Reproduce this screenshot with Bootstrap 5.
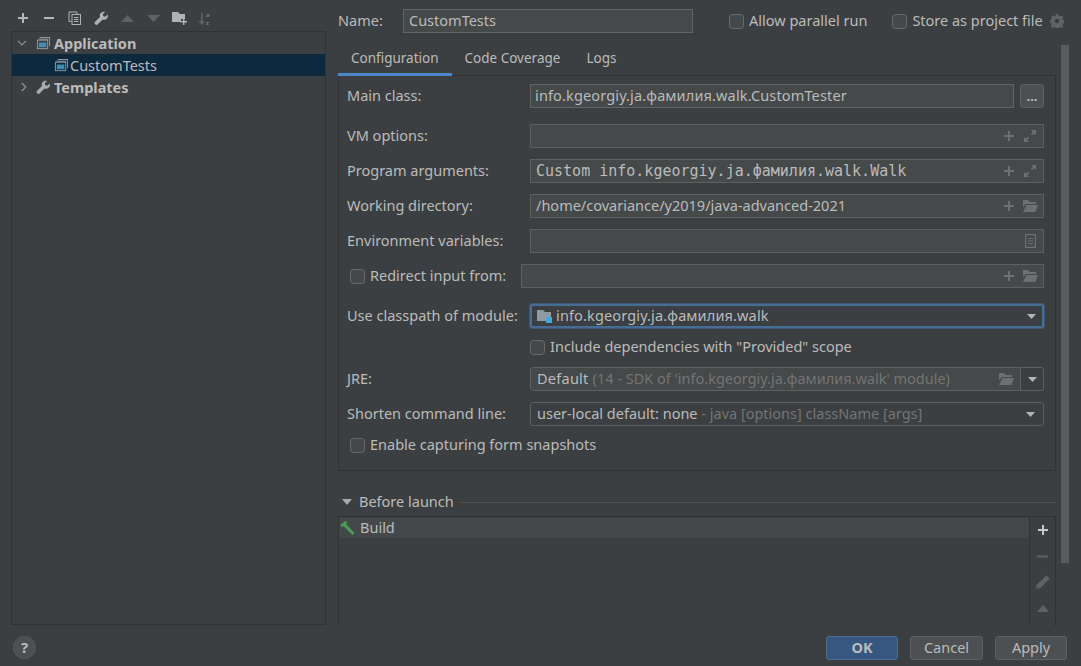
<!DOCTYPE html>
<html lang="en">
<head>
<meta charset="utf-8">
<title>Run Configurations</title>
<link href="https://cdn.jsdelivr.net/npm/bootstrap@5.3.0/dist/css/bootstrap.min.css" rel="stylesheet">
<style>
html,body{height:666px;overflow:hidden;background:#3c3f41;}
body{font-family:"Noto Sans","Liberation Sans",sans-serif;font-size:14.5px;line-height:19px;color:#bbb;}
.dlg{width:1081px;height:666px;}
.dlg-main{height:625px;}
.side{width:315px;margin-left:11px;flex:none;}
.tbar{height:31px;padding:5px 0 0 2px;gap:6px;}
.tbtn{width:20px;height:20px;flex:none;display:flex;align-items:center;justify-content:center;}
.tree{height:594px;border:1px solid #323232;padding-top:0;}
.tnode{height:22px;padding-left:5px;gap:0;}
.tnode.sel{background:#0d293e;}
.tlabel{font-weight:700;}
.chev{width:16px;flex:none;margin-right:3px;}
.ticon{margin-right:3px;}
.ticon-s{margin-right:1px;}
.tindent{width:18px;flex:none;}
.mainp{width:731px;margin-left:12px;flex:none;position:relative;}
.namerow{height:44px;padding-top:9px;}
.namelab{width:65px;flex:none;padding-bottom:2px;}
.fld{height:24px;background:#45494a;border:1px solid #646464;border-radius:0;padding:0 5px 2px 5px;color:#bbb;font-size:14.5px;line-height:19px;display:flex;align-items:center;box-shadow:none;white-space:nowrap;overflow:hidden;}
.fld.dim{border-color:#5e6060;}
.fld.mono{padding-bottom:0;}
.fld.mono .endic{margin-bottom:0;}
.namefld{width:290px;}
.ck{width:15px;height:15px;margin:0 5px 0 0;flex:none;background-color:#43494a;border:1px solid #6b6b6b;border-radius:2px;}
.ck-i{margin-left:3px;margin-right:5px;}
.ck-m{margin-right:5px;}
.cklab{padding-bottom:2px;}
.chk1{margin-left:36px;}
.chk2{margin-left:25px;}
.gearbx{margin-left:7px;}
.tabsrow{height:32px;width:718px;gap:0;border:0;}
.tablnk{height:32px;padding:4px 13px 0;color:#bbb;border-bottom:3px solid transparent;margin:0;line-height:20px;font-size:13.5px;}
.tablnk.on{border-bottom-color:#4a88c7;}
.tablnk:hover{color:#bbb;}
.cfg{width:718px;height:396px;margin-top:-1px;border:1px solid #323232;padding:8px 11px 0 8px;}
.frow{height:24px;}
.flab{width:183px;flex:none;padding-bottom:2px;}
.g16{margin-top:16px;}
.g11{margin-top:11px;}
.g7{margin-top:7px;}
.g8{margin-top:8px;}
.wfull{flex:1 1 auto;min-width:0;}
.browse{width:24px;height:24px;flex:none;margin-left:6px;background:#4c5052;border:1px solid #5e6060;border-radius:3px;padding:0;color:#bbb;font-size:13px;line-height:20px;font-weight:700;}
.mono{font-family:"DejaVu Sans Mono","Liberation Mono",monospace;font-size:15px;}
.endic{margin-left:auto;gap:7px;flex:none;margin-bottom:-2px;}
.lsc{letter-spacing:.14px;margin-left:-1px;}
.lsd{letter-spacing:.25px;}
.envic{margin-right:2px;}
.fade-t{color:#747474;letter-spacing:0;}
.focused{border:2px solid #466d94;border-radius:3px;background:#3c3f41;box-shadow:0 0 0 1px #3d5a78;padding-left:5px;padding-right:6px;}
.modic{margin-right:4px;margin-bottom:-2px;}
.cbx{background:#3c3f41;border-color:#5e6060;border-radius:3px;padding-left:6px;padding-right:8px;}
.jreb{width:23px;height:24px;flex:none;background:#3c3f41;border:1px solid #5e6060;border-left:0;border-radius:0 3px 3px 0;}
.jref{border-radius:3px 0 0 3px;padding-left:6px;padding-right:6px;}
.inner-ind{margin-left:183px;}
.redir{width:174px;flex:none;}
.bl-head{height:22px;margin-top:20px;width:718px;}
.bl-line{flex:1 1 auto;height:1px;background:#515151;margin-left:6px;}
.bl-tri{width:12px;margin:0 6px 0 3px;flex:none;}
.blbox{width:718px;height:110px;margin-top:3px;border:1px solid #323232;border-bottom:0;}
.bllist{flex:1 1 auto;padding-top:1px;}
.blitem{height:20px;background:#45484a;padding-left:1px;gap:5px;}
.bltool{width:26px;flex:none;border-left:1px solid #323232;gap:0;}
.bltool .tbtn{height:26px;width:25px;}
.vscroll{width:8px;flex:none;position:absolute;left:723px;top:45px;height:518px;background:#5a5c5e;}
.foot{height:41px;padding:11px 14px 0 13px;}
.helpb{width:23px;height:23px;border-radius:50%;background:#4c5052;border:1px solid #55595b;color:#bbb;font-weight:700;font-size:15px;line-height:21px;text-align:center;padding:0;}
.dbtn{height:24px;background:#4c5052;border:1px solid #5e6060;border-radius:3px;color:#bbb;font-size:14.5px;line-height:19px;padding:0 0 2px;}
.dbtn.prim{background:#365880;border-color:#4c708c;font-weight:700;}
.w72{width:72px;}
.w73{width:73px;margin-left:12px;}
.w72b{width:72px;margin-left:12px;}
svg{display:block;flex:none;}
</style>
</head>
<body>
<svg width="0" height="0" class="position-absolute">
<defs>
<symbol id="plus" viewBox="0 0 12 12"><path d="M5 1h2v4h4v2H7v4H5V7H1V5h4z"/></symbol>
<symbol id="folder" viewBox="0 0 16 14"><path d="M1 1h5l2 2h6v2H4L1 8z"/><path d="M4.500 6H16l-2.600 7H1z"/></symbol>
<symbol id="expand" viewBox="0 0 16 16"><path d="M9 2h5v5l-1.800-1.800-2 2-1.300-1.300 2-2z"/><path d="M7 14H2V9l1.800 1.800 2-2 1.300 1.300-2 2z"/></symbol>
<symbol id="wrench" viewBox="0 0 16 16"><path d="M14.600 3.600l-2.600 2.500-2-.6-.6-2 2.500-2.600c-2-.6-4 0-5 1.400-.9 1.200-1 2.700-.5 4L1.200 11.500c-.7.700-.7 1.900 0 2.700.8.800 2 .8 2.800 0l5.300-5.200c1.400.6 3 .3 4.200-.7 1.300-1.200 1.700-3 1.100-4.700z"/></symbol>
<symbol id="runcfg" viewBox="0 0 16 16"><path d="M4 1h11v10h-1V2H4z" fill="#8f9aa3"/><path d="M2 3h11v1H3z" fill="#8f9aa3"/><rect x="1.500" y="4.500" width="11" height="9" fill="none" stroke="#8f9aa3"/><rect x="3" y="7" width="8" height="5" fill="#3d8fb8"/></symbol>
</defs>
</svg>
<div class="dlg d-flex flex-column">
 <div class="dlg-main d-flex">
  <div class="side d-flex flex-column">
   <div class="tbar d-flex align-items-center">
    <span class="tbtn"><svg width="12" height="12" fill="#b4b8ba"><use href="#plus"/></svg></span>
    <span class="tbtn"><svg width="12" height="12" viewBox="0 0 12 12" fill="#b4b8ba"><rect x="1" y="5" width="10" height="2"/></svg></span>
    <span class="tbtn"><svg width="14" height="14" viewBox="0 0 14 14" fill="none" stroke="#aeb2b5"><path d="M3.500 10.500h-2.500v-9.500h8v2"/><rect x="4" y="3.500" width="8.500" height="10" fill="#3c3f41"/><path d="M6 6.500h4.500M6 8.500h4.500M6 10.500h4.500"/></svg></span>
    <span class="tbtn"><svg width="15" height="15" fill="#aeb2b5"><use href="#wrench"/></svg></span>
    <span class="tbtn"><svg width="13" height="7" viewBox="0 0 13 7" fill="#5e6264"><path d="M6.500 0L13 7H0z"/></svg></span>
    <span class="tbtn"><svg width="13" height="7" viewBox="0 0 13 7" fill="#5e6264"><path d="M0 0h13L6.500 7z"/></svg></span>
    <span class="tbtn"><svg width="15" height="14" viewBox="0 0 15 14" fill="#aeb2b5"><path d="M0 1h6l2 2h5v5H9v3H0z"/><path d="M11 8h1.500v2H15v1.500h-2.500V14H11v-2.500H8.500V10H11z"/></svg></span>
    <span class="tbtn"><svg width="16" height="17" viewBox="0 0 16 17"><path d="M4 3h1.500v8H8L4.800 15 1.500 11H4z" fill="#5e6264"/><text x="9" y="7" font-size="6" font-family="Noto Sans" font-weight="700" fill="#75797c">a</text><text x="9" y="15" font-size="6" font-family="Noto Sans" font-weight="700" fill="#75797c">z</text></svg></span>
   </div>
   <div class="tree">
    <div class="tnode d-flex align-items-center">
     <span class="chev"><svg width="10" height="6" viewBox="0 0 10 6" fill="none" stroke="#909396" stroke-width="1.200"><path d="M1 .8l4 4 4-4"/></svg></span>
     <svg width="15" height="15" class="ticon"><use href="#runcfg"/></svg>
     <span class="tlabel">Application</span>
    </div>
    <div class="tnode sel d-flex align-items-center">
     <span class="chev"></span><span class="tindent"></span>
     <svg width="15" height="15" class="ticon-s"><use href="#runcfg"/></svg>
     <span>CustomTests</span>
    </div>
    <div class="tnode d-flex align-items-center">
     <span class="chev"><svg width="6" height="10" viewBox="0 0 6 10" fill="none" stroke="#909396" stroke-width="1.200" class="ms-1"><path d="M.8 1l4 4-4 4"/></svg></span>
     <svg width="15" height="15" fill="#a8acaf" class="ticon"><use href="#wrench"/></svg>
     <span class="tlabel">Templates</span>
    </div>
   </div>
  </div>
  <div class="mainp">
   <div class="namerow d-flex align-items-start">
    <div class="namelab d-flex align-items-center" style="height:24px">Name:</div>
    <div class="fld namefld">CustomTests</div>
    <div class="d-flex align-items-center chk1" style="height:24px"><input type="checkbox" class="form-check-input ck" aria-label="Allow parallel run"><span class="cklab">Allow parallel run</span></div>
    <div class="d-flex align-items-center chk2" style="height:24px"><input type="checkbox" class="form-check-input ck" aria-label="Store as project file"><span class="cklab">Store as project file</span></div>
    <div class="gearbx d-flex align-items-center" style="height:24px"><svg width="14" height="14" viewBox="0 0 16 16" fill="#5f6365"><path fill-rule="evenodd" d="M6.500 0h3l.4 2 1.500.7 1.800-1.100 2 2.100-1.100 1.700.7 1.600 2 .4v3l-2 .4-.7 1.500 1.100 1.800-2 2-1.800-1.100-1.500.7-.4 2h-3l-.4-2-1.500-.7-1.800 1.100-2-2 1.100-1.800-.7-1.500-2-.4v-3l2-.4.7-1.600L1.300 3.700l2-2.100 1.800 1.100 1.500-.7zM8 5.500a2.500 2.500 0 100 5 2.500 2.500 0 000-5z"/></svg></div>
   </div>
   <div class="tabsrow nav d-flex">
    <a class="nav-link tablnk on" href="#">Configuration</a>
    <a class="nav-link tablnk" href="#">Code Coverage</a>
    <a class="nav-link tablnk" href="#">Logs</a>
   </div>
   <div class="cfg">
    <div class="frow d-flex align-items-center">
     <div class="flab">Main class:</div>
     <div class="fld wfull"><span class="lsc">info.kgeorgiy.ja.фамилия.walk.CustomTester</span></div>
     <button class="btn browse" type="button">...</button>
    </div>
    <div class="frow d-flex align-items-center g16">
     <div class="flab">VM options:</div>
     <div class="fld dim wfull"><span class="endic d-flex align-items-center"><svg width="12" height="12" fill="#6c7072"><use href="#plus"/></svg><svg width="16" height="16" fill="#6c7072"><use href="#expand"/></svg></span></div>
    </div>
    <div class="frow d-flex align-items-center g11">
     <div class="flab">Program arguments:</div>
     <div class="fld dim wfull mono">Custom info.kgeorgiy.ja.фамилия.walk.Walk<span class="endic d-flex align-items-center"><svg width="12" height="12" fill="#6c7072"><use href="#plus"/></svg><svg width="16" height="16" fill="#6c7072"><use href="#expand"/></svg></span></div>
    </div>
    <div class="frow d-flex align-items-center g11">
     <div class="flab">Working directory:</div>
     <div class="fld dim wfull">/home/covariance/y2019/java-advanced-2021<span class="endic d-flex align-items-center"><svg width="12" height="12" fill="#6c7072"><use href="#plus"/></svg><svg width="16" height="14" fill="#6c7072"><use href="#folder"/></svg></span></div>
    </div>
    <div class="frow d-flex align-items-center g11">
     <div class="flab">Environment variables:</div>
     <div class="fld dim wfull"><span class="endic d-flex align-items-center"><svg width="11" height="14" viewBox="0 0 11 14" fill="none" stroke="#6c7072" class="envic"><rect x=".5" y=".5" width="10" height="13" stroke-width="1.500"/><path d="M3 4.500h5M3 7h5M3 9.500h5"/></svg></span></div>
    </div>
    <div class="frow d-flex align-items-center g11">
     <div class="redir d-flex align-items-center"><input type="checkbox" class="form-check-input ck ck-i" aria-label="Redirect input from"><span class="cklab">Redirect input from:</span></div>
     <div class="fld dim wfull"><span class="endic d-flex align-items-center"><svg width="12" height="12" fill="#6c7072"><use href="#plus"/></svg><svg width="16" height="14" fill="#6c7072"><use href="#folder"/></svg></span></div>
    </div>
    <div class="frow d-flex align-items-center g16">
     <div class="flab">Use classpath of module:</div>
     <div class="fld focused wfull"><svg width="16" height="14" viewBox="0 0 16 14" class="modic"><path d="M0 1h6l2 2h6v9H0z" fill="#8f9aa3"/><rect x="9" y="8" width="6" height="6" fill="#3fa9d8"/></svg><span class="lsc">info.kgeorgiy.ja.фамилия.walk</span><span class="endic"><svg width="9" height="5" viewBox="0 0 9 5" fill="#b4b4b4"><path d="M0 0h9L4.500 5z"/></svg></span></div>
    </div>
    <div class="frow d-flex align-items-center g7 inner-ind"><input type="checkbox" class="form-check-input ck ck-m" aria-label="Include dependencies"><span class="cklab">Include dependencies with "Provided" scope</span></div>
    <div class="frow d-flex align-items-center g8">
     <div class="flab">JRE:</div>
     <div class="fld dim jref wfull"><span class="lsd">Default <span class="fade-t">(14 - SDK of 'info.kgeorgiy.ja.фамилия.walk' module)</span></span><span class="endic"><svg width="16" height="14" fill="#6c7072"><use href="#folder"/></svg></span></div>
     <div class="jreb d-flex align-items-center justify-content-center"><svg width="9" height="5" viewBox="0 0 9 5" fill="#b4b4b4"><path d="M0 0h9L4.500 5z"/></svg></div>
    </div>
    <div class="frow d-flex align-items-center g11">
     <div class="flab">Shorten command line:</div>
     <div class="fld cbx wfull"><span>user-local default: none <span class="fade-t">- java [options] className [args]</span></span><span class="endic"><svg width="9" height="5" viewBox="0 0 9 5" fill="#b4b4b4"><path d="M0 0h9L4.500 5z"/></svg></span></div>
    </div>
    <div class="frow d-flex align-items-center g7"><input type="checkbox" class="form-check-input ck ck-i" aria-label="Enable capturing"><span class="cklab">Enable capturing form snapshots</span></div>
   </div>
   <div class="bl-head d-flex align-items-center">
    <svg class="bl-tri" width="10" height="6" viewBox="0 0 12 6" fill="#a8a8a8"><path d="M1 0h10L6 6z"/></svg>
    <span class="cklab">Before launch</span><span class="bl-line"></span>
   </div>
   <div class="blbox d-flex">
    <div class="bllist">
     <div class="blitem d-flex align-items-center"><svg width="15" height="14" viewBox="0 0 15 14" fill="#499c54"><path d="M.5 4L5 0l2.500 1.500-1.500 1.500 8.500 9-2 2L3.500 5 2 6.500z"/></svg><span class="cklab">Build</span></div>
    </div>
    <div class="bltool d-flex flex-column align-items-center">
     <span class="tbtn"><svg width="12" height="12" fill="#c6c8ca"><use href="#plus"/></svg></span>
     <span class="tbtn"><svg width="11" height="11" viewBox="0 0 11 11" fill="#5e6264"><rect x="0" y="4.500" width="11" height="2"/></svg></span>
     <span class="tbtn"><svg width="16" height="16" viewBox="0 0 14 14" fill="#5e6264"><path d="M10 1l3 3-8.500 8.500L1 13l.5-3.500z"/></svg></span>
     <span class="tbtn"><svg width="12" height="7" viewBox="0 0 12 7" fill="#5e6264"><path d="M6 0l6 7H0z"/></svg></span>
    </div>
   </div>
   <div class="vscroll"></div>
  </div>
 </div>
 <div class="foot d-flex align-items-start">
  <div class="helpb">?</div>
  <button class="btn dbtn prim w72 ms-auto" type="button">OK</button>
  <button class="btn dbtn w73" type="button">Cancel</button>
  <button class="btn dbtn w72b" type="button">Apply</button>
 </div>
</div>
<script src="https://cdn.jsdelivr.net/npm/bootstrap@5.3.0/dist/js/bootstrap.bundle.min.js"></script>
</body>
</html>
